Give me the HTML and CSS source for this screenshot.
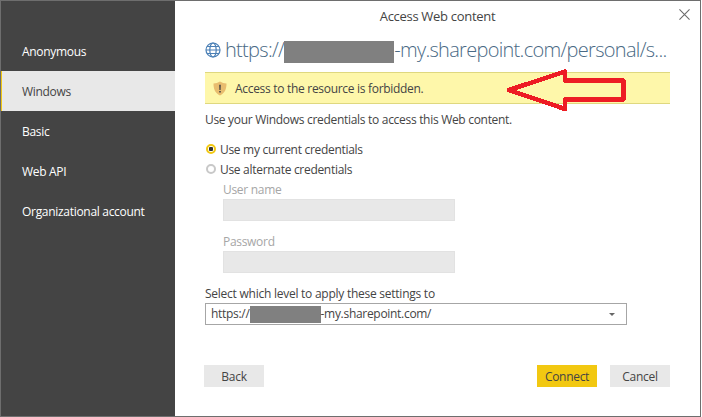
FILE: index.html
```html
<!DOCTYPE html>
<html lang="en">
<head>
<meta charset="utf-8">
<title>Access Web content</title>
<link rel="stylesheet" href="styles.css">
</head>
<body>
<div class="window">
  <nav class="sidebar">
    <div class="nav-item">Anonymous</div>
    <div class="nav-item selected">Windows</div>
    <div class="nav-item">Basic</div>
    <div class="nav-item">Web API</div>
    <div class="nav-item">Organizational account</div>
  </nav>
  <main class="content">
    <header class="title">Access Web content</header>
    <svg class="close" width="11" height="11" viewBox="0 0 12 12"><path d="M.5.5l11 11M11.500.5l-11 11" stroke="#6b6b6b" stroke-width="1.200" fill="none"/></svg>
    <div class="url">
      <svg class="globe" width="16" height="16" viewBox="0 0 16 16" fill="none" stroke="#4a7fb5" stroke-width="1.200"><circle cx="8" cy="8" r="7"/><ellipse cx="8" cy="8" rx="3.200" ry="7"/><path d="M1 8h14M2 4.500h12M2 11.500h12"/></svg>
      <span class="url-text">https://<span class="redact redact-large"></span>-my.sharepoint.com/personal/s...</span>
    </div>
    <div class="banner">
      <svg class="shield" width="14" height="15" viewBox="0 0 14 15"><path d="M7 .5c2 1.300 4 1.800 6.500 2 0 5.500-1.500 9.500-6.500 12C2 12 .5 8 .5 2.500 3 2.300 5 1.800 7 .5z" fill="#e8bd6f"/><path d="M6.200 3.800h1.600l-.2 5.200H6.400zM6.200 10h1.600v1.600H6.200z" fill="#444"/></svg>
      <span>Access to the resource is forbidden.</span>
    </div>
    <svg class="arrow" width="130" height="52" viewBox="0 0 130 52" fill="none" shape-rendering="crispEdges"><path d="M9 26 65 7.500v9h58.500v19H65V45z" stroke="#ed1c24" stroke-width="4.500" stroke-linejoin="round"/></svg>
    <p class="intro">Use your Windows credentials to access this Web content.</p>
    <div class="radio-row first"><span class="radio on"></span>Use my current credentials</div>
    <div class="radio-row"><span class="radio"></span>Use alternate credentials</div>
    <div class="fields">
      <label class="field-label">User name</label>
      <div class="input"></div>
      <label class="field-label second">Password</label>
      <div class="input"></div>
    </div>
    <div class="level-label">Select which level to apply these settings to</div>
    <div class="select">
      <span>https://<span class="redact redact-small"></span>-my.sharepoint.com/</span>
      <span class="caret"></span>
    </div>
    <footer class="buttons">
      <button class="btn back">Back</button>
      <button class="btn primary">Connect</button>
      <button class="btn">Cancel</button>
    </footer>
  </main>
</div>
</body>
</html>
```
FILE: styles.css
```css
* { box-sizing: border-box; }
html, body { margin: 0; padding: 0; }
body {
  width: 702px;
  height: 417px;
  overflow: hidden;
  font-family: "Open Sans", "Noto Sans", sans-serif;
  font-size: 12px;
  letter-spacing: -.3px;
  color: #444;
}
.window {
  display: flex;
  width: 701px;
  height: 417px;
  border: 1px solid #6e6e6e;
  background: #fff;
}
.sidebar {
  flex: 0 0 174px;
  background: #444;
  padding-top: 30px;
  color: #fff;
}
.nav-item {
  height: 40px;
  line-height: 42px;
  padding-left: 21px;
}
.nav-item.selected {
  background: #e8e8e8;
  color: #444;
  border-left: 1px solid #f2c811;
  padding-left: 20px;
}
.content {
  position: relative;
  flex: 1;
  padding: 0 30px;
  display: flex;
  flex-direction: column;
}
.title {
  height: 30px;
  line-height: 31px;
  font-size: 13px;
  text-align: center;
}
.close { position: absolute; top: 8px; right: 10px; }
.url {
  display: flex;
  align-items: center;
  gap: 4px;
  height: 37px;
  font-size: 20px;
  font-weight: 300;
  white-space: nowrap;
  color: #4a6a85;
  letter-spacing: -.7px;
}
.globe { flex: none; }
.redact { display: inline-block; background: #808080; vertical-align: middle; }
.redact-large { width: 110px; height: 22px; }
.redact-small { width: 71px; height: 17px; }
.banner {
  display: flex;
  align-items: center;
  gap: 8px;
  height: 32px;
  margin-top: 4px;
  padding-left: 8px;
  background: #fef7aa;
  border-top: 1px solid #dfd87f;
  border-bottom: 1px solid #dfd87f;
}
.shield { flex: none; }
.arrow { position: absolute; left: 325px; top: 63px; }
.intro { margin: 6px 0 0; height: 18px; line-height: 20px; }
.radio-row {
  display: flex;
  align-items: center;
  gap: 4px;
  height: 20px;
}
.radio-row.first { margin-top: 11px; }
.radio {
  flex: none;
  width: 10px;
  height: 10px;
  margin-left: 1px;
  border-radius: 50%;
  border: 2px solid #c8c8c8;
  background: #fff;
}
.radio.on {
  border-color: #f2c811;
  background: radial-gradient(circle, #333 0 2px, #fff 2.500px);
}
.fields { padding-left: 18px; }
.field-label { display: block; height: 20px; line-height: 22px; color: #a6a6a6; }
.field-label.second { margin-top: 10px; }
.input {
  width: 232px;
  height: 22px;
  background: #e8e8e8;
  border: 1px solid #e2e2e2;
}
.level-label { margin-top: 12px; height: 18px; line-height: 18px; letter-spacing: -.25px; }
.select {
  display: flex;
  align-items: center;
  justify-content: space-between;
  width: 422px;
  height: 22px;
  padding: 0 11px 0 5px;
  border: 1px solid #a6a6a6;
}
.caret {
  width: 0;
  height: 0;
  border-left: 3px solid transparent;
  border-right: 3px solid transparent;
  border-top: 3px solid #666;
}
.buttons {
  display: flex;
  gap: 13px;
  margin: 40px 0 0 -1px;
}
.btn {
  width: 60px;
  height: 22px;
  padding: 0;
  border: 0;
  background: #e8e8e8;
  color: #444;
  font: inherit;
  letter-spacing: inherit;
}
.back { margin-right: auto; }
.primary { background: #f2c811; }
```
